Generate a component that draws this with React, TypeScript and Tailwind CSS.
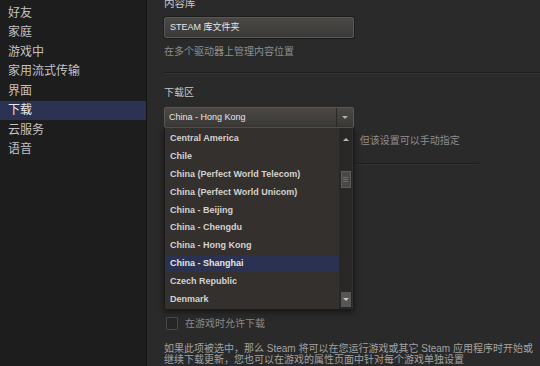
import React from "react"

const FONT = { fontFamily: '"Liberation Sans", "Noto Sans CJK SC", sans-serif' }

const NAV_ITEMS = ["好友", "家庭", "游戏中", "家用流式传输", "界面", "下载", "云服务", "语音"]
const ACTIVE_NAV = "下载"

const REGIONS = [
  "Central America",
  "Chile",
  "China (Perfect World Telecom)",
  "China (Perfect World Unicom)",
  "China - Beijing",
  "China - Chengdu",
  "China - Hong Kong",
  "China - Shanghai",
  "Czech Republic",
  "Denmark",
]
const HOVERED_REGION = "China - Shanghai"

const Sidebar = () => {
  return (
    <nav className="flex h-full w-[147px] shrink-0 flex-col border-r border-[#151515] bg-[#1d1d1e] pt-[3px]">
      {NAV_ITEMS.map((item) => {
        const active = item === ACTIVE_NAV
        return (
          <div
            key={item}
            className={`flex h-[19.5px] items-center pl-[8px] text-[12px] leading-none ${
              active ? "bg-[#2c3352] text-[#e8e8e8]" : "text-[#c2c2c2]"
            }`}
          >
            {item}
          </div>
        )
      })}
    </nav>
  )
}

// Open region dropdown, laid over the page below the select
const RegionList = () => {
  return (
    <div className="absolute left-0 top-full z-10 flex h-[182px] w-[190px] border border-t-0 border-[#1c1b1a] bg-[#33302e] shadow-[0_2px_6px_rgba(0,0,0,0.5)]">
      <ul className="flex-1 pt-[2px]">
        {REGIONS.map((region) => (
          <li
            key={region}
            className={`flex h-[17.8px] items-center pl-[5px] text-[9px] font-bold leading-none ${
              region === HOVERED_REGION ? "bg-[#2b3150] text-[#e4e4e4]" : "text-[#d4d2d0]"
            }`}
          >
            {region}
          </li>
        ))}
      </ul>
      {/* scrollbar */}
      <div className="mr-[1px] flex w-[13px] flex-col items-center bg-[#2a2827] py-[2px]">
        <div className="flex h-[18px] w-[11px] items-center justify-center">
          <span className="h-0 w-0 border-x-[3px] border-b-[3px] border-x-transparent border-b-[#b8b8b8]" />
        </div>
        <div className="mt-[23px] flex h-[17px] w-[10px] flex-col items-center justify-center gap-[1px] border border-[#5e5c5a] bg-[#4a4846]">
          <span className="h-px w-[5px] bg-[#6e6c6a]" />
          <span className="h-px w-[5px] bg-[#6e6c6a]" />
          <span className="h-px w-[5px] bg-[#6e6c6a]" />
        </div>
        <div className="mt-auto flex h-[15px] w-[10px] items-center justify-center bg-[#585654]">
          <span className="h-0 w-0 border-x-[3px] border-t-[3px] border-x-transparent border-t-[#c8c8c8]" />
        </div>
      </div>
    </div>
  )
}

const App = () => {
  return (
    <div style={FONT} className="flex h-[366px] w-[540px] overflow-hidden bg-[#2a2a2a]">
      <Sidebar />

      <main className="flex flex-1 flex-col pl-[17px]">
        {/* Content library */}
        <div className="-mt-[3px] h-[12px] text-[10.5px] leading-[12px] text-[#c8c8c8]">内容库</div>
        <div className="mt-[8px] flex h-[21px] w-[190px] items-center rounded-[2px] border border-[#5a5755] bg-gradient-to-b from-[#4a4744] to-[#3c3a38] pl-[5px] text-[9px] text-[#e6e6e6] shadow-[0_0_0_1px_#1e1e1e]">
          STEAM 库文件夹
        </div>
        <p className="mt-[8px] h-[12px] text-[10px] leading-[12px] text-[#8e8e8e]">在多个驱动器上管理内容位置</p>

        <div className="mt-[14px] h-[2px] border-t border-b border-t-[#1e1e1e] border-b-[#333333]" />

        {/* Download region */}
        <div className="mt-[13px] h-[12px] text-[10px] leading-[12px] text-[#c8c8c8]">下载区</div>
        <div className="relative mt-[8px] w-[190px]">
          <div className="flex h-[21px] items-center rounded-[2px] border border-[#5a5755] bg-gradient-to-b from-[#4a4744] to-[#3c3a38] text-[9px] text-[#e6e6e6]">
            <span className="flex-1 pl-[4px]">China - Hong Kong</span>
            <span className="flex h-full w-[17px] items-center justify-center border-l border-[#2a2928]">
              <span className="h-0 w-0 border-x-[3px] border-t-[3px] border-x-transparent border-t-[#b0b0b0]" />
            </span>
          </div>
          <RegionList />
        </div>

        <p className="mt-[7px] h-[12px] whitespace-nowrap pl-[4px] text-[10px] leading-[12px] text-[#8e8e8e]">
          Steam 会自动检测距离最近的下载服务器，但该设置可以手动指定
        </p>
        <div className="mt-[16px] h-[2px] w-[315px] border-t border-b border-t-[#1f1f1f] border-b-[#303030]" />

        {/* Allow downloads during gameplay */}
        <label className="mt-[152px] flex items-center gap-[7px]">
          <span className="ml-[2px] h-[13px] w-[12px] rounded-[1px] border border-[#4a4a4a] bg-[#262626]" />
          <span className="text-[10px] leading-[12px] text-[#8a8a8a]">在游戏时允许下载</span>
        </label>
        <p className="mt-[13px] text-[10px] leading-[11px] text-[#a2a2a2]">
          如果此项被选中，那么 Steam 将可以在您运行游戏或其它 Steam 应用程序时开始或
          <br />
          继续下载更新，您也可以在游戏的属性页面中针对每个游戏单独设置
        </p>
      </main>
    </div>
  )
}

export default App
